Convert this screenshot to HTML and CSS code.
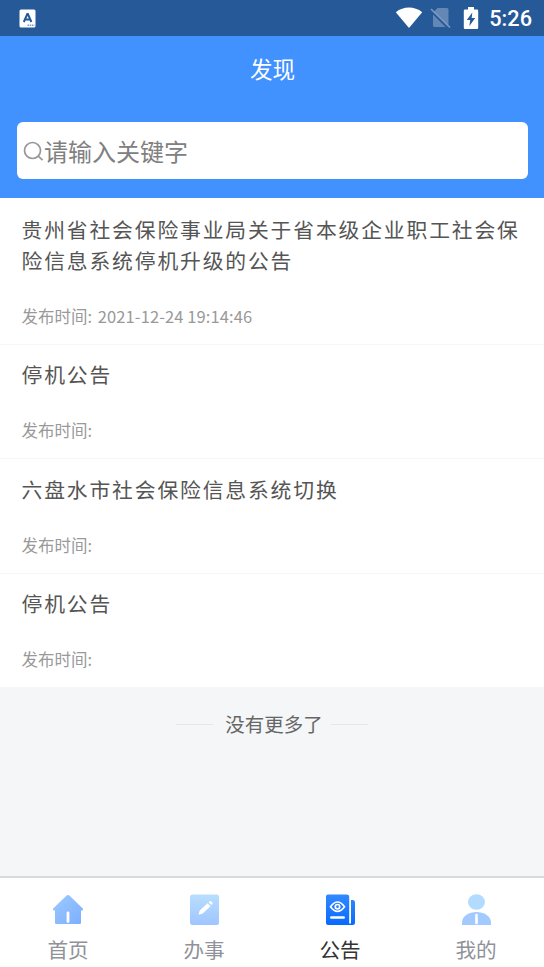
FILE: index.html
```html
<!DOCTYPE html>
<html lang="zh-CN">
<head>
<meta charset="utf-8">
<title>发现</title>
<link rel="stylesheet" href="styles.css">
</head>
<body>
<div class="status">
  <svg class="status-app" width="18" height="19" viewBox="0 0 18 19"><rect x="0.5" y="0.5" width="16" height="18" rx="1.5" fill="#fff"/><path d="M4.8 13 8.3 5h.6l3.5 8M6 10.6h5" fill="none" stroke="#265998" stroke-width="2"/><path d="M8.5 16.3h7" stroke="#7d9bc2" stroke-width="1.5" stroke-dasharray="1.5 .7"/></svg>
  <svg class="wifi" width="28" height="22" viewBox="0 0 28 22"><path d="M14 21 .8 5.200C8.500-1 19.500-1 27.200 5.200Z" fill="#fff"/></svg>
  <svg class="sim" width="22" height="22" viewBox="0 0 22 22"><path d="M7.500 1H17q1.500 0 1.500 1.500V20H4.500q-1.500 0-1.500-1.500V5.500Z" fill="#6487b6"/><path d="M.5 3.500 18.500 21.500" stroke="#265998" stroke-width="2"/><path d="M1 2 20 20.500" stroke="#7d9ac2" stroke-width="1.500"/></svg>
  <svg class="battery" width="16" height="23" viewBox="0 0 16 23"><path d="M5 0h6v2.500h3q1.200 0 1.200 1.200v17q0 1.300-1.200 1.300H2Q.8 22 .8 20.700v-17Q.8 2.500 2 2.500h3Z" fill="#fff"/><path d="M9.300 5.500 3.800 13h3.400l-.8 6 5.800-8H8.700Z" fill="#265998"/></svg>
  <span class="clock">5:26</span>
</div>
<header class="header">
  <h1>发现</h1>
  <div class="search">
    <svg width="21" height="21" viewBox="0 0 21 21" fill="none" stroke="#969696" stroke-width="1.700"><circle cx="9.500" cy="9.500" r="8"/><path d="m15.200 15.200 4.400 4"/></svg>
    <span>请输入关键字</span>
  </div>
</header>
<main class="list">
  <article class="item"><h2>贵州省社会保险事业局关于省本级企业职工社会保险信息系统停机升级的公告</h2><p>发布时间: <span>2021-12-24 19:14:46</span></p></article>
  <article class="item"><h2>停机公告</h2><p>发布时间:</p></article>
  <article class="item"><h2>六盘水市社会保险信息系统切换</h2><p>发布时间:</p></article>
  <article class="item"><h2>停机公告</h2><p>发布时间:</p></article>
</main>
<div class="end"><i></i><span>没有更多了</span><i></i></div>
<nav class="tabs">
  <a class="tab">
    <svg width="32" height="32" viewBox="0 0 32 32"><defs><linearGradient id="home" x2="1" y2="1"><stop stop-color="#9dcaff"/><stop offset="1" stop-color="#7caeff"/></linearGradient></defs><path d="M14.600 1.600q1.400-1.200 2.800 0L30.800 14.500q1 1.800-.8 2H29v12.300q0 1.200-1.200 1.200H4.200Q3 30 3 28.800V16.500H2q-1.800-.2-.8-2Z" fill="url(#home)"/><path d="M16 19v8.500" stroke="#fff" stroke-width="2.800" stroke-linecap="round"/></svg>
    <span>首页</span>
  </a>
  <a class="tab">
    <svg width="32" height="32" viewBox="0 0 32 32"><defs><linearGradient id="pale" x2="0" y2="1"><stop stop-color="#b8deff"/><stop offset="1" stop-color="#9fc5ff"/></linearGradient></defs><rect x="2" y=".5" width="29" height="30.500" rx="2.500" fill="url(#pale)"/><path d="m10.500 20.800 1.200-4.300 7.800-7.300 3 3-7.800 7.300ZM20.500 8.300l1.300-1.100q.8-.4 1.500.2l1 1.100q.6.700 0 1.400l-1 1Z" fill="#fff"/></svg>
    <span>办事</span>
  </a>
  <a class="tab active">
    <svg width="32" height="32" viewBox="0 0 32 32"><defs><linearGradient id="blue" x2="0" y2="1"><stop stop-color="#3289ff"/><stop offset="1" stop-color="#0869ff"/></linearGradient></defs><path d="M4 .5h19q2.200 0 2.200 2.200V31H4q-2 0-2-2V2.500q0-2 2-2ZM27 6h1.500q2.500 0 2.500 2.500V28.500q0 2.500-2.500 2.500H24v-1.500h3Z" fill="url(#blue)"/><path d="M6.500 12.700q7-9.400 14 0-7 9.400-14 0Z" fill="none" stroke="#fff" stroke-width="1.700"/><circle cx="13.500" cy="12.700" r="2.200" fill="none" stroke="#fff" stroke-width="1.700"/><path d="M7.300 23.500h12.400" stroke="#fff" stroke-width="2.500" stroke-linecap="round"/></svg>
    <span>公告</span>
  </a>
  <a class="tab">
    <svg width="32" height="32" viewBox="0 0 32 32"><ellipse cx="16.500" cy="8" rx="8.500" ry="7.800" fill="#b3dbff"/><path d="M2 31v-2.500C2.300 21.800 9 18 16.500 18S30.700 21.800 31 28.500V31Z" fill="#a3caff"/><path d="M16.500 21v8" stroke="#fff" stroke-width="2.600" stroke-linecap="round"/></svg>
    <span>我的</span>
  </a>
</nav>
</body>
</html>
```
FILE: styles.css
```css
* { box-sizing: border-box; }
body {
  margin: 0;
  height: 967px;
  display: flex;
  flex-direction: column;
  overflow: hidden;
  background: #f5f6f8;
  font-family: "Noto Sans CJK SC", sans-serif;
}
h1, h2, p { margin: 0; font-weight: 400; }
svg { display: block; flex: none; }
.status {
  height: 36px;
  flex: none;
  display: flex;
  align-items: center;
  padding: 0 12px 0 19px;
  background: #265998;
  color: #fff;
}
.wifi { margin-left: 358px; }
.sim { margin-left: 7px; }
.battery { margin-left: 11px; }
.clock {
  margin-left: auto;
  padding-top: 2px;
  font: 500 21.700px/26px Roboto, sans-serif;
}
.header {
  height: 162px;
  flex: none;
  padding: 0 16px 0 17px;
  background: #4191ff;
}
.header h1 {
  height: 86px;
  padding-top: 16px;
  color: #fff;
  font-size: 22.6px;
  line-height: 34px;
  text-align: center;
}
.search {
  height: 57px;
  display: flex;
  align-items: center;
  padding-left: 6px;
  border-radius: 6px;
  background: #fff;
  color: #808080;
  font-size: 24px;
  line-height: 36px;
}
.search svg { margin-top: 2px; }
.list {
  flex: none;
  padding-top: 1.700px;
  background: #fff;
}
.item {
  padding: 14.300px 18px 16px 21.500px;
  border-bottom: 1px solid #f7f7f8;
}
.item h2 {
  color: #555;
  font-size: 20.800px;
  line-height: 31px;
  letter-spacing: 1.850px;
}
.item p {
  margin-top: 28px;
  color: #999;
  font-size: 16.500px;
  line-height: 24px;
}
.item span { margin-left: 2px; letter-spacing: .1px; }
.end {
  display: flex;
  align-items: center;
  justify-content: center;
  padding-top: 21.300px;
  color: #666;
  font-size: 19.500px;
  line-height: 30px;
}
.end span { margin: 0 8.500px 0 12.500px; }
.end i { width: 37px; height: 1px; background: #e6e7e9; }
.tabs {
  height: 91px;
  flex: none;
  margin-top: auto;
  display: grid;
  grid-template-columns: repeat(4, 1fr);
  border-top: 2px solid #d9dadb;
  background: #fff;
}
.tab {
  display: flex;
  flex-direction: column;
  align-items: center;
  padding-top: 16px;
  color: #909299;
  font-size: 20.600px;
  line-height: 30px;
}
.tab span { margin-top: 8px; }
.active { color: #333; }
```
